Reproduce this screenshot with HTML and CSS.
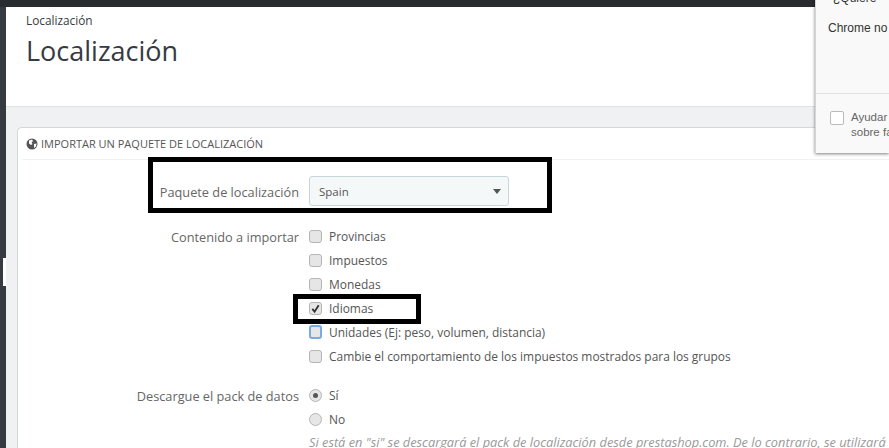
FILE: index.html
```html
<!DOCTYPE html>
<html lang="es">
<head>
<meta charset="utf-8">
<title>Localización</title>
<link rel="stylesheet" href="styles.css">
</head>
<body>
<div class="topbar"></div>
<div class="layout">
  <aside class="sidebar"><span class="notch"></span></aside>
  <main class="content">
    <header class="pagehead">
      <div class="crumb">Localización</div>
      <h1 class="title">Localización</h1>
    </header>
    <section class="panel">
      <h2 class="panel-head">
        <svg class="globe" viewBox="0 0 12 12" width="12" height="12"><circle cx="6" cy="6" r="5.5" fill="#555"/><path d="M3 2.500l3-1 1 1.500-1.500 1.500 1 1.500-1.500 1-2-1.500zM8 6l2.500-.5-.5 3-2 1.500z" fill="#fff"/></svg>
        IMPORTAR UN PAQUETE DE LOCALIZACIÓN
      </h2>
      <div class="form">
        <div class="row row-select">
          <div class="label">Paquete de localización</div>
          <div class="select"><span>Spain</span><i class="caret"></i></div>
        </div>
        <div class="row row-checks">
          <div class="label">Contenido a importar</div>
          <div class="options">
            <div class="opt"><span class="check"></span>Provincias</div>
            <div class="opt"><span class="check"></span>Impuestos</div>
            <div class="opt"><span class="check"></span>Monedas</div>
            <div class="opt"><span class="check"><svg viewBox="0 0 12 12" width="11" height="11"><path d="M2.500 6.500l2.500 3 4.500-7" fill="none" stroke="#333" stroke-width="2"/></svg></span>Idiomas</div>
            <div class="opt"><span class="check focus"></span>Unidades (Ej: peso, volumen, distancia)</div>
            <div class="opt"><span class="check"></span>Cambie el comportamiento de los impuestos mostrados para los grupos</div>
          </div>
        </div>
        <div class="row row-radios">
          <div class="label">Descargue el pack de datos</div>
          <div class="options">
            <div class="opt"><span class="radio on"></span>Sí</div>
            <div class="opt"><span class="radio"></span>No</div>
            <p class="help">Si está en "si" se descargará el pack de localización desde prestashop.com. De lo contrario, se utilizará el</p>
          </div>
        </div>
      </div>
    </section>
  </main>
</div>
<div class="mark mark-select"></div>
<div class="mark mark-idiomas"></div>
<aside class="popup">
  <div class="popup-q">¿Quiere</div>
  <div class="popup-msg">Chrome no</div>
  <div class="popup-foot">
    <span class="popup-box"></span>
    <div class="popup-text">Ayudar<br>sobre fa</div>
  </div>
</aside>
</body>
</html>
```
FILE: styles.css
```css
* { box-sizing: border-box; }
html, body { margin: 0; height: 100%; overflow: hidden; }
body { position: relative; font-family: "Open Sans", sans-serif; font-size: 11.950px; color: #555; background: #eff1f2; }
.topbar { height: 7px; background: #282b30; }
.layout { display: flex; height: 441px; }
.sidebar { width: 6px; background: #363a41; position: relative; }
.notch { position: absolute; left: 3px; top: 251px; width: 3px; height: 28px; background: #fff; }
.content { flex: 1; min-width: 0; }
.pagehead { height: 100px; background: #fff; border-bottom: 1px solid #dfe2e4; padding: 6px 0 0 20px; }
.crumb { font-size: 11.800px; line-height: 14px; color: #363a41; }
.title { margin: 7px 0 0; font-size: 27px; font-weight: 400; line-height: 34px; color: #363a41; }
.panel { margin: 20px 0 0 11px; background: #fff; border: 1px solid #d3d8db; border-right: 0; border-bottom: 0; border-radius: 5px 0 0 0; height: 330px; padding: 0 0 0 4px; }
.panel-head { margin: 0; height: 32px; border-bottom: 1px solid #eff1f2; display: flex; align-items: center; gap: 3px; padding-left: 4px; font-size: 11px; font-weight: 400; color: #555; white-space: nowrap; }
.globe { flex: none; }
.form { padding-top: 16px; }
.row { display: grid; grid-template-columns: 277px 1fr; column-gap: 10px; }
.label { text-align: right; color: #666; font-size: 12.750px; line-height: 24px; padding-top: 1px; white-space: nowrap; }
.row-select { align-items: center; height: 30px; }
.select { width: 200px; height: 30px; background: #f5f8f9; border: 1px solid #c7d6db; border-radius: 3px; display: flex; align-items: center; justify-content: space-between; padding: 0 7px 0 9px; color: #555; font-size: 11.500px; }
.caret { width: 0; height: 0; border: 4.500px solid transparent; border-top: 5px solid #555; border-bottom: 0; }
.row-checks { margin-top: 18px; }
.row-radios { margin-top: 15px; }
.options { min-width: 0; }
.opt { display: flex; align-items: center; height: 24px; gap: 7px; white-space: nowrap; color: #555; }
.check { width: 13px; height: 13px; flex: none; background: #e6e6e6; border: 1px solid #b5b5b5; border-radius: 3px; display: flex; }
.check.focus { border: 2px solid #7aa9e6; background: #e6e6e6; width: 13px; height: 14px; }
.radio { width: 13px; height: 13px; flex: none; background: #e6e6e6; border: 1px solid #b5b5b5; border-radius: 50%; display: flex; align-items: center; justify-content: center; }
.radio.on::before { content: ""; width: 5px; height: 5px; border-radius: 50%; background: #555; }
.help { margin: 3px 0 0; font-size: 12.800px; font-style: italic; color: #999; white-space: nowrap; line-height: 16px; }
.mark { position: absolute; border-style: solid; border-color: #000; background: transparent; }
.mark-select { left: 148px; top: 157px; width: 404px; height: 56px; border-width: 5px; }
.mark-idiomas { left: 293px; top: 294px; width: 128px; height: 30px; border-width: 5px; }
.popup { position: absolute; left: 815px; top: -9px; width: 74px; height: 162px; background: #f9f9f9; border-left: 1px solid #d5d5d5; box-shadow: 0 1px 3px rgba(0,0,0,.5); font-family: "Liberation Sans", sans-serif; font-size: 12px; color: #333; overflow: hidden; }
.popup-q { margin: 0 0 0 17px; line-height: 14px; height: 14px; }
.popup-msg { margin: 15px 0 0 12px; line-height: 16px; height: 16px; }
.popup-foot { position: absolute; left: 0; right: 0; top: 102px; height: 60px; border-top: 1px solid #e2e2e2; display: flex; gap: 7px; padding: 16px 0 0 14px; }
.popup-box { width: 14px; height: 14px; border: 1px solid #bbb; border-radius: 2px; background: #fff; flex: none; margin-top: 1px; }
.popup-text { font-size: 11.500px; line-height: 15px; color: #666; white-space: nowrap; }
```
